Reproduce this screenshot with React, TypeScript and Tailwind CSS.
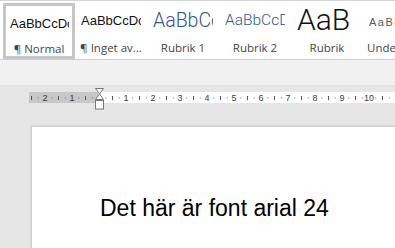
import { FC } from "react";

type Style = {
  label: string;
  sample: string;
  cls: string;
};

const styles: Style[] = [
  { label: "¶ Normal", sample: "AaBbCcDc", cls: "text-[13px] text-[#111] pt-[11px]" },
  { label: "¶ Inget av...", sample: "AaBbCcDc", cls: "text-[13px] text-[#111] pt-[11px]" },
  { label: "Rubrik 1", sample: "AaBbCc", cls: "text-[19.5px] font-light text-[#2f5597] pt-[8px] font-['Roboto',sans-serif]" },
  { label: "Rubrik 2", sample: "AaBbCcD", cls: "text-[15.5px] font-light text-[#2f5597] pt-[10px] font-['Roboto',sans-serif]" },
  { label: "Rubrik", sample: "AaB", cls: "text-[30px] font-light text-[#111] pt-[2px] font-['Roboto',sans-serif]" },
  { label: "Underrubrik", sample: "AaBbCcD", cls: "text-[11px] tracking-[1.5px] text-[#595959] pt-[14px]" },
];

const Ruler: FC = () => {
  const origin = 99;
  const step = 6.75;
  const marks = [];
  for (let k = -10; k <= 44; k++) {
    if (k === 0) continue;
    const x = origin + k * step;
    if (x < 30 || x > 395) continue;
    if (k % 4 === 0) {
      marks.push(
        <text key={k} x={x} y={9} textAnchor="middle" fontSize="9" fill="#3c3c3c" fontFamily="'Liberation Sans', sans-serif">
          {Math.abs(k / 4)}
        </text>
      );
    } else if (Math.abs(k % 4) === 2) {
      marks.push(<rect key={k} x={x - 0.5} y={4} width={1} height={4} fill="#555" />);
    } else {
      marks.push(<rect key={k} x={x - 0.5} y={5.5} width={1} height={1} fill="#666" />);
    }
  }
  return (
    <svg width="395" height="11" className="block">
      <rect x={29} y={0} width={69} height={11} fill="#c8c8c8" />
      <rect x={98} y={0} width={297} height={11} fill="#ffffff" />
      {marks}
    </svg>
  );
};

const App: FC = () => {
  return (
    <div className="w-[395px] h-[248px] overflow-hidden bg-[#e6e6e6] font-['Liberation_Sans',sans-serif]">
      {/* style gallery */}
      <div className="h-[60px] bg-white border-t border-[#d4d4d4] border-b border-b-[#cfcfcf] flex pl-[2px] pt-[2px] overflow-hidden">
        {styles.map((s, i) => (
          <div
            key={s.label}
            className={`w-[72px] shrink-0 h-[56px] flex flex-col ${i === 0 ? "border-[3px] border-[#c6c6c6] ml-[1px] w-[70px]" : ""}`}
          >
            <div className={`h-[34px] overflow-hidden whitespace-nowrap leading-none ${i === 0 ? "pl-[4px] pr-[3px]" : "pl-[6px] pr-[6px]"}`}>
              <div className={`${s.cls} overflow-hidden`}>{s.sample}</div>
            </div>
            <div
              className={`text-[11.5px] text-[#444] whitespace-nowrap leading-none font-['Open_Sans',sans-serif] ${i === 5 ? "pl-[4px] text-left" : "text-center"} ${i === 0 ? "pt-[3px]" : "pt-[5px]"}`}
            >
              {s.label}
            </div>
          </div>
        ))}
      </div>

      {/* area above ruler */}
      <div className="h-[26px] bg-[#f1f1f1] border-b border-[#e2e2e2]" />

      {/* ruler */}
      <div className="relative h-[40px] pt-[6px]">
        <Ruler />
        <div className="absolute left-[95px] top-[2px] flex flex-col items-center">
          <svg width="9" height="22" className="block">
            <path d="M0.5 0.5 H8.5 L4.5 6 L8.5 11.5 H0.5 L4.5 6 Z" fill="#fff" stroke="#777" strokeWidth="1" />
            <rect x="0.5" y="12.5" width="8" height="8.5" fill="#fff" stroke="#777" strokeWidth="1" />
          </svg>
        </div>
      </div>

      {/* page */}
      <div className="ml-[31px] h-[200px] bg-white border-l border-t border-[#cfcfcf] shadow-[0_0_2px_rgba(0,0,0,0.15)] pl-[68px] pt-[70px]">
        <div className="text-[23px] leading-none text-black whitespace-nowrap">Det här är font arial 24</div>
      </div>
    </div>
  );
};

export default App;
